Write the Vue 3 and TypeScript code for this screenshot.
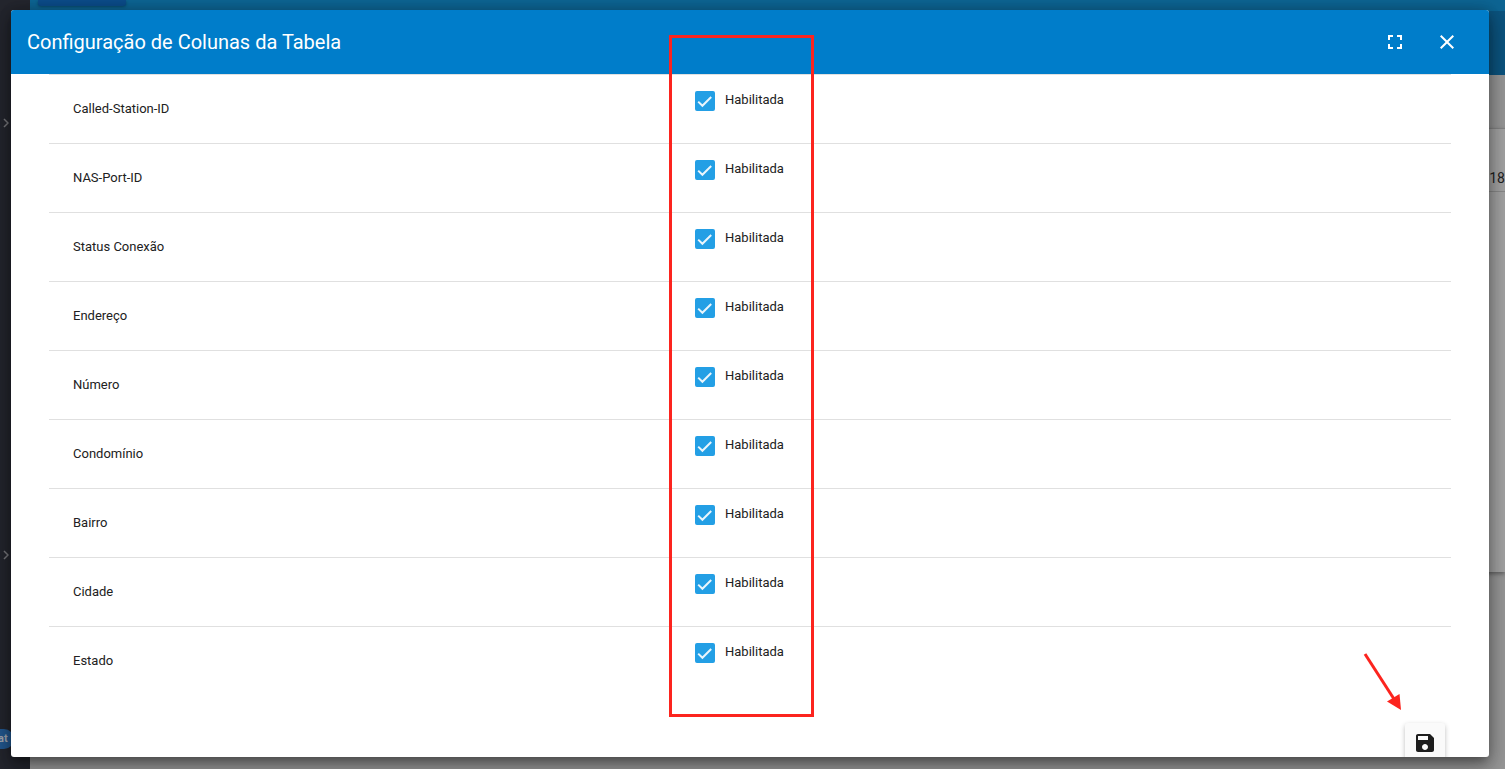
<script setup lang="ts">
import { reactive } from 'vue'

interface ColumnOption {
  id: string
  label: string
  enabled: boolean
}

const columns = reactive<ColumnOption[]>([
  { id: 'called-station-id', label: 'Called-Station-ID', enabled: true },
  { id: 'nas-port-id', label: 'NAS-Port-ID', enabled: true },
  { id: 'status', label: 'Status Conexão', enabled: true },
  { id: 'endereco', label: 'Endereço', enabled: true },
  { id: 'numero', label: 'Número', enabled: true },
  { id: 'condominio', label: 'Condomínio', enabled: true },
  { id: 'bairro', label: 'Bairro', enabled: true },
  { id: 'cidade', label: 'Cidade', enabled: true },
  { id: 'estado', label: 'Estado', enabled: true },
])
</script>

<template>
  <div class="page">
    <aside class="sidebar">
      <svg class="chevron chevron-top" viewBox="0 0 6 10" aria-hidden="true"><path d="M1 1l4 4-4 4" /></svg>
      <svg class="chevron chevron-bottom" viewBox="0 0 6 10" aria-hidden="true"><path d="M1 1l4 4-4 4" /></svg>
      <span class="chat">at</span>
    </aside>
    <div class="main">
      <div class="topbar"><span class="topbar-button"></span></div>
      <div class="subbar"></div>
      <div class="card"><div class="card-row">18</div></div>
    </div>

    <section class="dialog" role="dialog" aria-labelledby="dialog-title">
      <header class="dialog-header">
        <h2 id="dialog-title">Configuração de Colunas da Tabela</h2>
        <button type="button" class="icon-button" aria-label="Tela cheia">
          <svg viewBox="0 0 24 24" aria-hidden="true">
            <path d="M7 14H5v5h5v-2H7v-3zm-2-4h2V7h3V5H5v5zm12 7h-3v2h5v-5h-2v3zM14 5v2h3v3h2V5h-5z" />
          </svg>
        </button>
        <button type="button" class="icon-button" aria-label="Fechar">
          <svg viewBox="0 0 24 24" aria-hidden="true">
            <path d="M19 6.41L17.59 5 12 10.59 6.41 5 5 6.41 10.59 12 5 17.59 6.41 19 12 13.41 17.59 19 19 17.59 13.41 12z" />
          </svg>
        </button>
      </header>

      <div class="dialog-body">
        <table class="columns">
          <tbody>
            <tr v-for="column in columns" :key="column.id">
              <td class="name">{{ column.label }}</td>
              <td class="state">
                <label class="check" :for="column.id">
                  <span class="box">
                    <input :id="column.id" v-model="column.enabled" type="checkbox" />
                    <svg viewBox="0 0 20 20" aria-hidden="true"><path d="M3.200 10.600l4.200 4.200L16.200 6" /></svg>
                  </span>
                  <span class="check-text">Habilitada</span>
                </label>
              </td>
            </tr>
          </tbody>
        </table>
        <footer class="actions">
          <button type="button" class="save" aria-label="Salvar">
            <svg viewBox="0 0 24 24" aria-hidden="true">
              <path d="M17 3H5c-1.110 0-2 .9-2 2v14c0 1.100.89 2 2 2h14c1.100 0 2-.9 2-2V7l-4-4zm-5 16c-1.660 0-3-1.340-3-3s1.340-3 3-3 3 1.340 3 3-1.340 3-3 3zm3-10H5V5h10v4z" />
            </svg>
          </button>
        </footer>
      </div>

      <div class="highlight"></div>
      <svg class="arrow" viewBox="0 0 40 60" aria-hidden="true">
        <path class="shaft" d="M2 3L31 48" />
        <path class="head" d="M38 59L24 50.500 36.500 43z" />
      </svg>
    </section>
  </div>
</template>

<style>
body {
  background: #8f8f8f;
}
</style>

<style scoped>
.page {
  position: relative;
  display: flex;
  min-height: 100vh;
  overflow: hidden;
  font-family: Roboto, "Liberation Sans", sans-serif;
  color: #212121;
}

.sidebar {
  position: relative;
  flex: 0 0 30px;
  background: #24262e;
}

.chevron {
  position: absolute;
  left: 3px;
  width: 6px;
  height: 10px;
  fill: none;
  stroke: #77787c;
  stroke-width: 1.5;
}

.chevron-top {
  top: 118px;
}

.chevron-bottom {
  top: 550px;
}

.chat {
  position: absolute;
  bottom: 20px;
  left: -20px;
  box-sizing: border-box;
  width: 34px;
  padding-left: 18px;
  border-radius: 10px;
  background: #23588f;
  color: #a3a8b0;
  font-size: 11px;
  font-weight: 700;
  line-height: 20px;
}

.main {
  flex: 1;
  background: #989898;
}

.topbar {
  height: 11px;
  padding-left: 8px;
  background: #0d6594;
}

.topbar-button {
  display: block;
  width: 88px;
  height: 6px;
  border-radius: 0 0 3px 3px;
  background: #0c4c8a;
  box-shadow: 0 1px 3px rgba(0, 0, 0, 0.3);
}

.subbar {
  height: 64px;
  background: #0c547f;
}

.card {
  height: 443px;
  margin-top: 53px;
  border-top: 1px solid #858585;
  background: #a4a4a4;
  box-shadow: 0 2px 4px rgba(0, 0, 0, 0.35);
}

.card-row {
  height: 62px;
  border-bottom: 1px solid #8a8a8a;
  font-size: 14px;
  line-height: 98px;
  text-align: right;
}

.dialog {
  position: absolute;
  inset: 10px 16px 12px 11px;
  display: flex;
  flex-direction: column;
  border-radius: 3px;
  background: #fff;
  box-shadow:
    0 7px 8px -4px rgba(0, 0, 0, 0.2),
    0 13px 19px 2px rgba(0, 0, 0, 0.14),
    0 5px 24px 4px rgba(0, 0, 0, 0.2),
    0 2px 12px rgba(0, 0, 0, 0.2);
}

.dialog-header {
  display: flex;
  flex: 0 0 64px;
  align-items: center;
  gap: 12px;
  padding: 0 22px 0 16px;
  border-radius: 3px 3px 0 0;
  background: #007dca;
  color: #fff;
}

h2 {
  flex: 1;
  margin: 0;
  font-size: 20px;
  font-weight: 400;
  line-height: 28px;
}

button {
  padding: 0;
  border: 0;
  cursor: pointer;
}

.icon-button {
  display: grid;
  place-items: center;
  width: 40px;
  height: 40px;
  background: transparent;
  color: inherit;
}

.icon-button svg {
  width: 24px;
  height: 24px;
  fill: currentColor;
}

.dialog-body {
  flex: 1;
  min-height: 0;
  overflow: hidden;
  padding: 0 38px;
  border-radius: 0 0 3px 3px;
}

.columns {
  width: 100%;
  table-layout: fixed;
  border-spacing: 0;
  font-size: 13px;
  line-height: 20px;
}

td {
  box-sizing: border-box;
  height: 69px;
  padding: 0 24px;
  border-top: 1px solid #e0e0e0;
}

.name {
  width: 622px;
}

.state {
  padding-top: 16px;
  vertical-align: top;
}

.check {
  display: inline-flex;
  gap: 10px;
}

.box {
  display: grid;
  width: 20px;
  height: 20px;
}

.box input,
.box svg {
  grid-area: 1 / 1;
  width: 20px;
  height: 20px;
  margin: 0;
}

.box input {
  appearance: none;
  border: 2px solid #757575;
  border-radius: 2px;
}

.box input:checked {
  border-color: #239fe5;
  background: #239fe5;
}

.box svg {
  fill: none;
  stroke: #e9f5fc;
  stroke-width: 2;
  pointer-events: none;
}

.check-text {
  line-height: 18px;
}

.actions {
  display: flex;
  justify-content: flex-end;
  padding: 28px 6px 0;
}

.save {
  display: grid;
  place-items: center;
  width: 40px;
  height: 40px;
  border-radius: 3px;
  background: #fafafa;
  box-shadow: 0 2px 5px rgba(0, 0, 0, 0.26);
}

.save svg {
  width: 24px;
  height: 24px;
  fill: #1d1d1d;
}

.highlight {
  position: absolute;
  top: 25px;
  bottom: 40px;
  left: 658px;
  box-sizing: border-box;
  width: 145px;
  border: 3px solid #fc241e;
  pointer-events: none;
}

.arrow {
  position: absolute;
  right: 86px;
  bottom: 46px;
  width: 40px;
  height: 60px;
  pointer-events: none;
}

.shaft {
  fill: none;
  stroke: #fc241e;
  stroke-width: 3;
}

.head {
  fill: #fc241e;
}
</style>
